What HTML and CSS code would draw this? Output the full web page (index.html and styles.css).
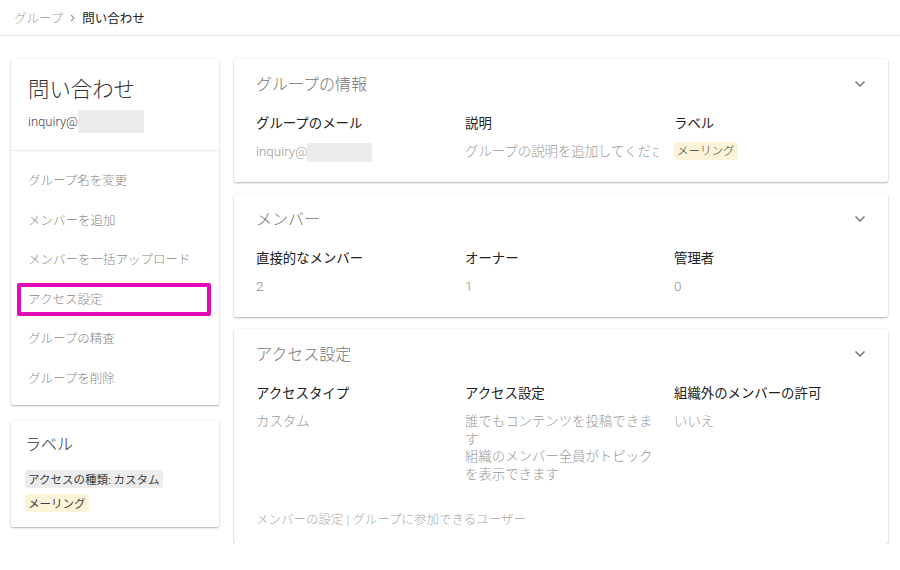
FILE: index.html
```html
<!DOCTYPE html>
<html lang="ja">
<head>
<meta charset="utf-8">
<link rel="stylesheet" href="styles.css">
</head>
<body>
<header class="crumbs">
  <span class="crumb-parent">グループ</span>
  <svg class="crumb-sep" width="8" height="10" viewBox="0 0 8 10"><polyline points="2,2 5,5 2,8" fill="none" stroke="#9e9e9e" stroke-width="1.3"/></svg>
  <span class="crumb-current">問い合わせ</span>
</header>
<main class="layout">
  <aside class="side">
    <section class="card side-card">
      <div class="side-head">
        <div class="side-title">問い合わせ</div>
        <div class="side-mail"><span>inquiry@</span><span class="mask mask-lg"></span></div>
      </div>
      <nav class="menu">
        <div class="menu-item">グループ名を変更</div>
        <div class="menu-item">メンバーを追加</div>
        <div class="menu-item">メンバーを一括アップロード</div>
        <div class="menu-item highlighted">アクセス設定</div>
        <div class="menu-item">グループの精査</div>
        <div class="menu-item">グループを削除</div>
      </nav>
    </section>
    <section class="card label-card">
      <div class="label-title">ラベル</div>
      <div class="chips">
        <span class="chip chip-gray">アクセスの種類: カスタム</span>
        <span class="chip chip-yellow">メーリング</span>
      </div>
    </section>
  </aside>
  <div class="content">
    <section class="card panel">
      <div class="panel-head">
        <div class="panel-title">グループの情報</div>
        <svg class="chev" width="12" height="8" viewBox="0 0 12 8"><polyline points="1.5,1.5 6,6 10.5,1.5" fill="none" stroke="#757575" stroke-width="1.5"/></svg>
      </div>
      <div class="fields">
        <div class="field">
          <div class="f-label">グループのメール</div>
          <div class="f-value"><span>inquiry@</span><span class="mask mask-sm"></span></div>
        </div>
        <div class="field">
          <div class="f-label">説明</div>
          <div class="f-value clip">グループの説明を追加してください</div>
        </div>
        <div class="field">
          <div class="f-label">ラベル</div>
          <div class="f-value"><span class="chip chip-yellow">メーリング</span></div>
        </div>
      </div>
    </section>
    <section class="card panel">
      <div class="panel-head">
        <div class="panel-title">メンバー</div>
        <svg class="chev" width="12" height="8" viewBox="0 0 12 8"><polyline points="1.5,1.5 6,6 10.5,1.5" fill="none" stroke="#757575" stroke-width="1.5"/></svg>
      </div>
      <div class="fields">
        <div class="field">
          <div class="f-label">直接的なメンバー</div>
          <div class="f-value num">2</div>
        </div>
        <div class="field">
          <div class="f-label">オーナー</div>
          <div class="f-value num">1</div>
        </div>
        <div class="field">
          <div class="f-label">管理者</div>
          <div class="f-value num">0</div>
        </div>
      </div>
    </section>
    <section class="card panel">
      <div class="panel-head">
        <div class="panel-title">アクセス設定</div>
        <svg class="chev" width="12" height="8" viewBox="0 0 12 8"><polyline points="1.5,1.5 6,6 10.5,1.5" fill="none" stroke="#757575" stroke-width="1.5"/></svg>
      </div>
      <div class="fields">
        <div class="field">
          <div class="f-label">アクセスタイプ</div>
          <div class="f-value">カスタム</div>
        </div>
        <div class="field">
          <div class="f-label">アクセス設定</div>
          <div class="f-value multi">誰でもコンテンツを投稿できます<br>組織のメンバー全員がトピックを表示できます</div>
        </div>
        <div class="field">
          <div class="f-label">組織外のメンバーの許可</div>
          <div class="f-value">いいえ</div>
        </div>
      </div>
      <div class="panel-foot">メンバーの設定 | グループに参加できるユーザー</div>
    </section>
  </div>
</main>
</body>
</html>
```

FILE: styles.css
```css
* { box-sizing: border-box; }
body {
  margin: 0;
  background: #ffffff;
  font-family: Roboto, "Noto Sans CJK JP", sans-serif;
  color: #212121;
}
.crumbs {
  height: 36px;
  border-bottom: 1px solid #e3e3e3;
  display: flex;
  align-items: center;
  padding: 0 0 0 14px;
  font-size: 12.5px;
}
.crumb-parent { color: #9e9e9e; font-weight: 300; }
.crumb-sep { margin: 0 5px 0 6px; }
.crumb-current { color: #202124; }

.layout {
  display: flex;
  align-items: flex-start;
  gap: 15px;
  padding: 23px 0 0 11px;
}
.card {
  background: #fff;
  border-radius: 2px;
  box-shadow: 0 1px 2px rgba(0,0,0,0.28), 0 0 2px rgba(0,0,0,0.08);
}
.side {
  width: 208px;
  display: flex;
  flex-direction: column;
  gap: 16px;
}
.side-head {
  padding: 17px 17px 17px;
  border-bottom: 1px solid #ececec;
}
.side-title {
  font-size: 21.4px;
  line-height: 28px;
  color: #333;
  font-weight: 300;
}
.side-mail {
  margin-top: 6px;
  display: flex;
  align-items: center;
  font-size: 13px;
  color: #444;
  font-weight: 300;
  height: 23px;
}
.mask { display: inline-block; background: #ececec; }
.mask-lg { width: 66px; height: 23px; }
.mask-sm { width: 65px; height: 19px; }
.menu {
  padding: 9px 0 8px;
}
.menu-item {
  height: 39.5px;
  display: flex;
  align-items: center;
  padding-left: 17px;
  font-size: 12.5px;
  color: #8a8a8a;
  font-weight: 300;
  position: relative;
}
.highlighted::after {
  content: "";
  position: absolute;
  left: 6px;
  right: 8px;
  top: 4px;
  bottom: 2.5px;
  border: 4px solid #e30bb8;
  border-radius: 2px;
}
.label-card {
  padding: 13px 14px 15px;
}
.label-title {
  font-size: 16px;
  line-height: 22px;
  color: #333;
  font-weight: 300;
}
.chips {
  margin-top: 14px;
  display: flex;
  flex-direction: column;
  align-items: flex-start;
  gap: 6px;
}
.chip {
  display: inline-flex;
  align-items: center;
  height: 18px;
  padding: 0 3px;
  border-radius: 3px;
  font-size: 11.5px;
  color: #3c4043;
}
.chip-gray { background: #ececec; }
.chip-yellow { background: #fdf3d9; }

.content {
  width: 654px;
  display: flex;
  flex-direction: column;
  gap: 12px;
}
.panel {
  padding: 13px 22px 20px;
}
.panel-head {
  display: flex;
  justify-content: space-between;
  align-items: center;
  height: 22px;
}
.panel-title {
  font-size: 16px;
  color: #757575;
  font-weight: 300;
}
.chev { margin-top: 2px; }
.fields {
  margin-top: 20px;
  display: grid;
  grid-template-columns: 193px 193px 193px;
  column-gap: 16px;
}
.f-label {
  font-size: 13.4px;
  line-height: 20px;
  color: #212121;
}
.f-value {
  margin-top: 8px;
  font-size: 13.4px;
  line-height: 20px;
  color: #9a9a9a;
  font-weight: 300;
  display: flex;
  align-items: center;
}
.f-value.clip {
  display: block;
  white-space: nowrap;
  overflow: hidden;
}
.f-value.multi {
  display: block;
  line-height: 17.7px;
  margin-top: 9px;
}
.f-value.num { color: #8e8e8e; }
.panel-foot {
  margin-top: 27px;
  font-size: 12.5px;
  color: #a8a8a8;
  font-weight: 300;
  line-height: 18px;
}
.panel:last-child { padding-bottom: 15px; }
```
